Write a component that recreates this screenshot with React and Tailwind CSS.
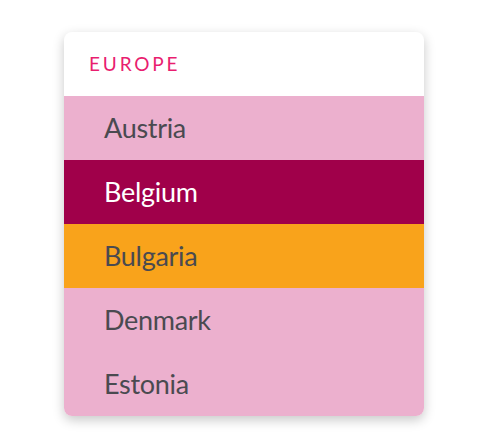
const countries = [
  { name: "Austria", className: "bg-[#ecb0ce] text-[#4a4a50]" },
  { name: "Belgium", className: "bg-[#a0004a] text-white" },
  { name: "Bulgaria", className: "bg-[#f9a31b] text-[#4a4a50]" },
  { name: "Denmark", className: "bg-[#ecb0ce] text-[#4a4a50]" },
  { name: "Estonia", className: "bg-[#ecb0ce] text-[#4a4a50]" },
];

const App = () => {
  return (
    <div className="w-[488px] h-[448px] bg-white px-16 py-8 font-['Lato',sans-serif]">
      <div className="rounded-lg bg-white shadow-[0_4px_12px_rgba(0,0,0,0.22)] overflow-hidden">
        <div className="h-16 flex items-center pl-[25px]">
          <span className="text-[19px] tracking-[0.15em] text-[#e91e6f]">EUROPE</span>
        </div>
        <ul>
          {countries.map((c) => (
            <li key={c.name} className={`h-16 flex items-center pl-10 text-[27px] tracking-[-0.3px] ${c.className}`}>
              {c.name}
            </li>
          ))}
        </ul>
      </div>
    </div>
  );
};

export default App;
